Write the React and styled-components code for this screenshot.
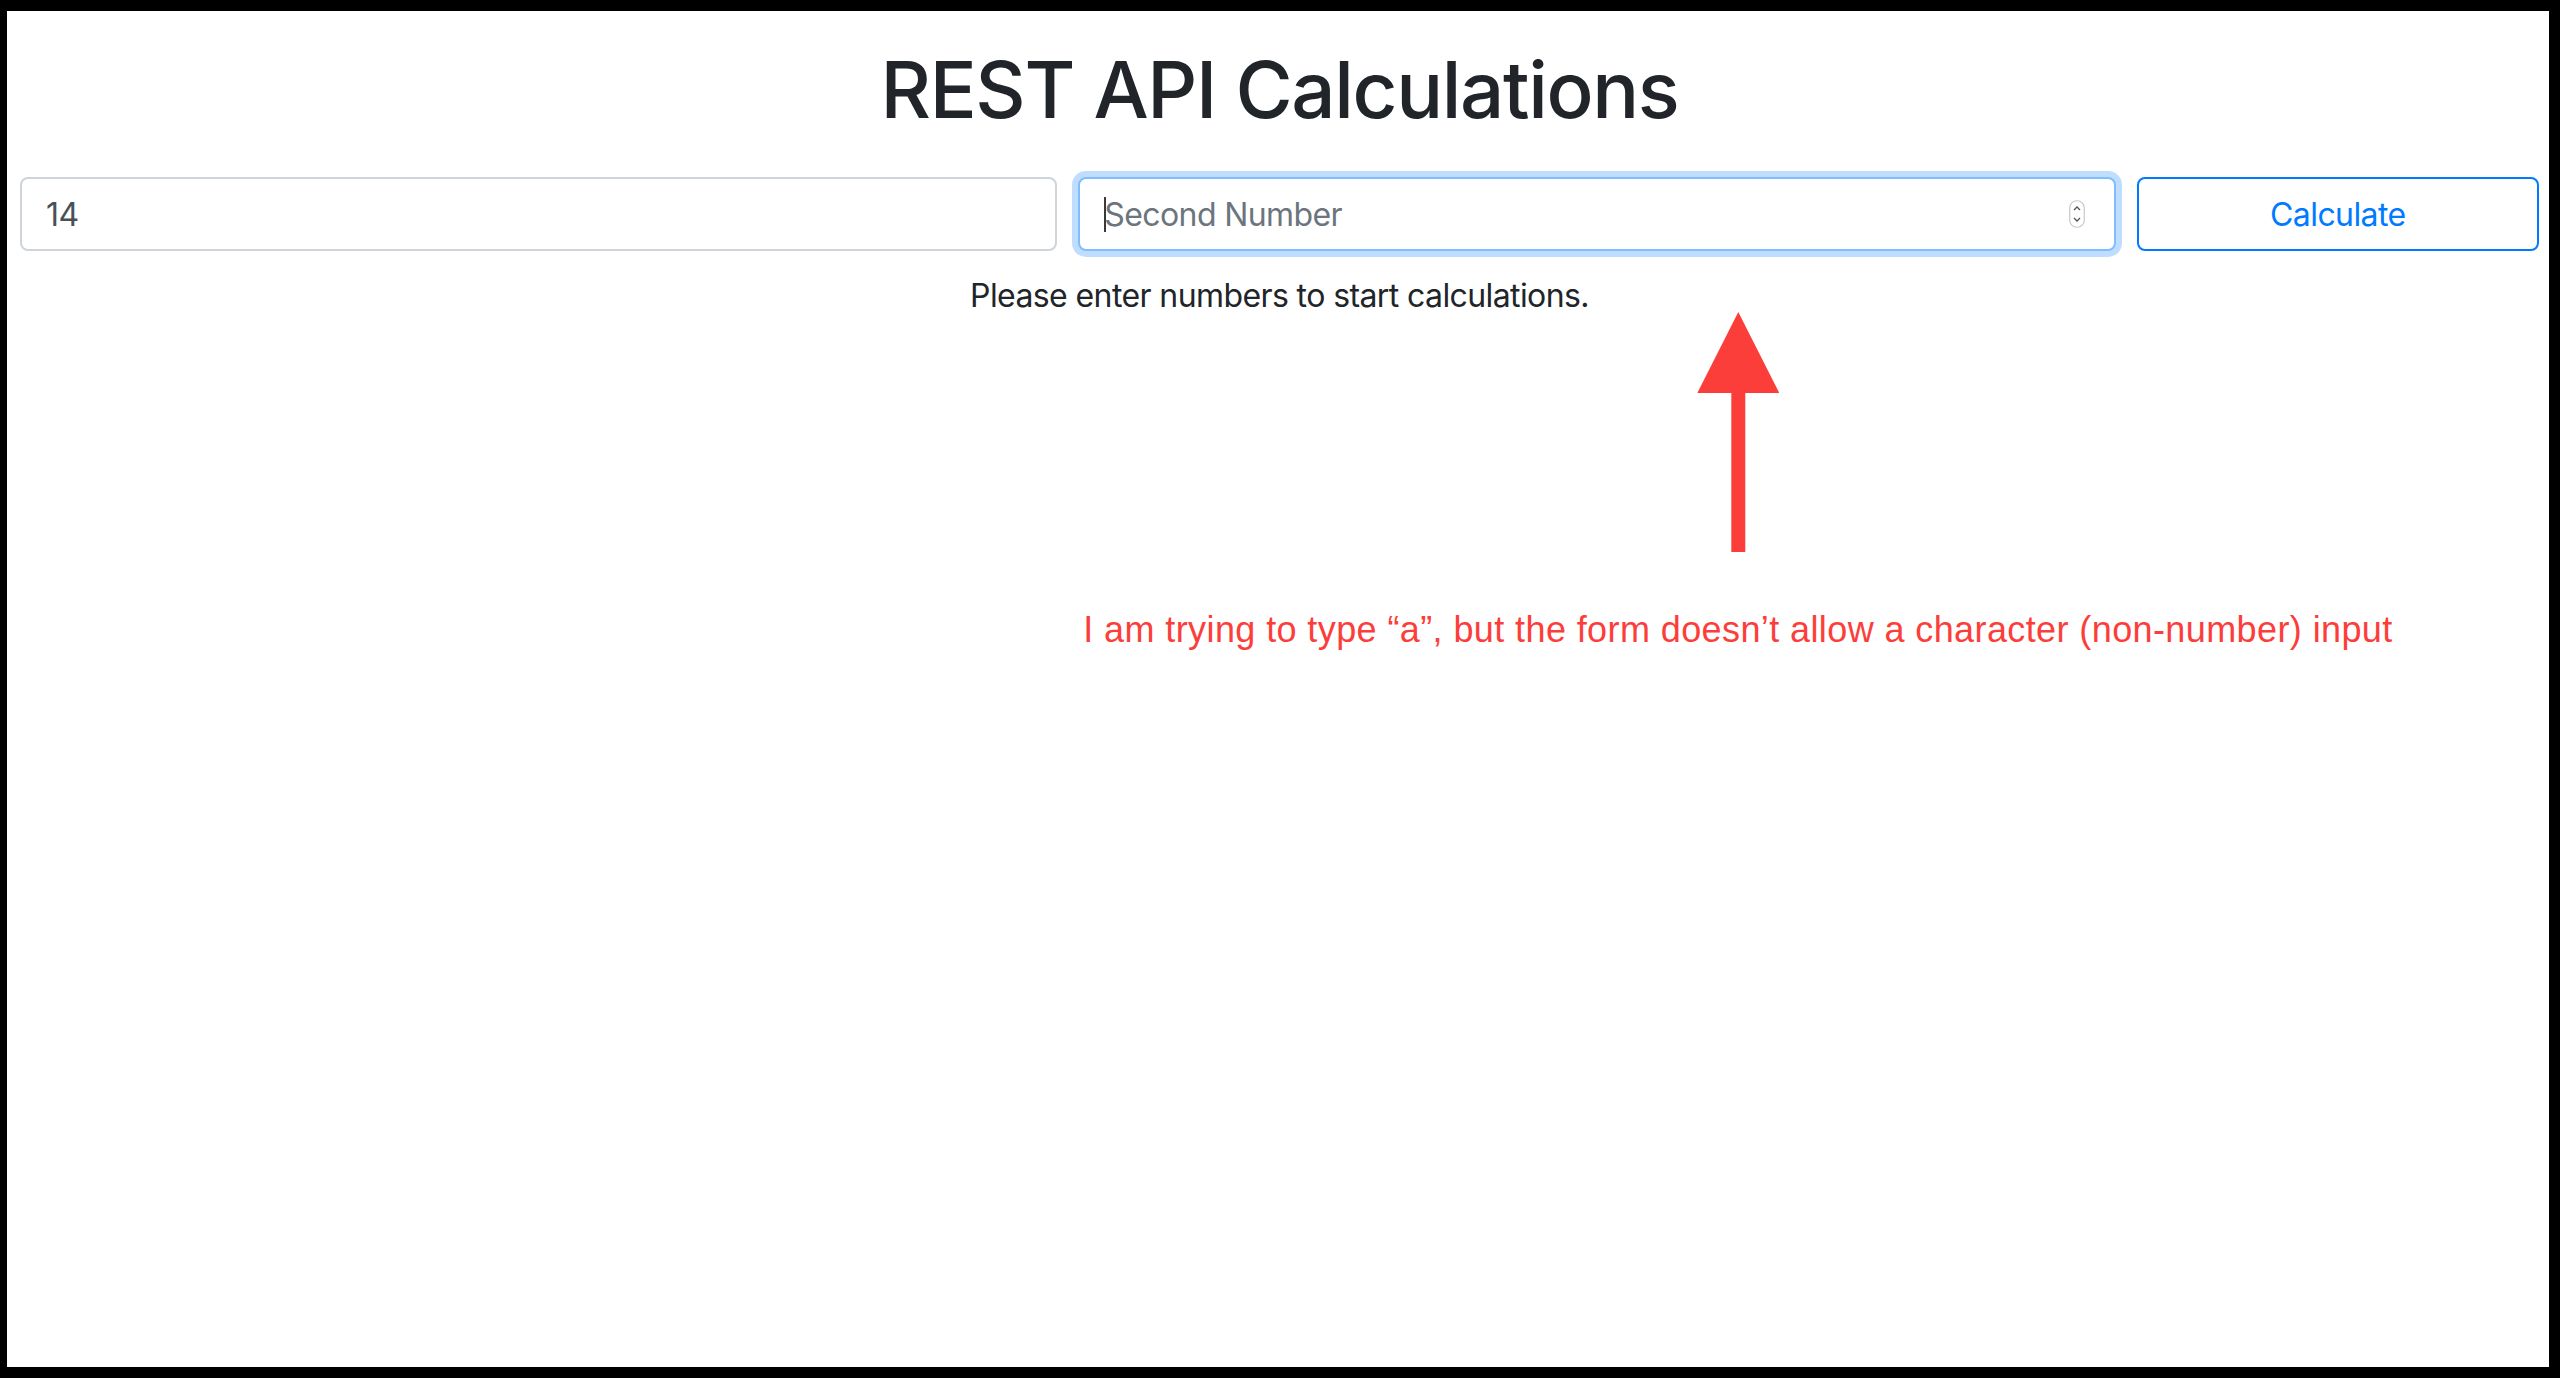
import React from "react";
import styled, { createGlobalStyle } from "styled-components";

const Global = createGlobalStyle`
  html, body { margin: 0; padding: 0; background: #000; }
  body { font-family: Inter, "Liberation Sans", Arial, sans-serif; }
  * { box-sizing: border-box; }
`;

const Frame = styled.div`
  padding: 11px 11px 11px 7px;
  background: #000;
`;

const Panel = styled.main`
  position: relative;
  height: 1356px;
  background: #fff;
  padding: 0 10px 0 13px;
  overflow: hidden;
`;

const Title = styled.h1`
  margin: 31px 0 0;
  font-size: 78px;
  line-height: 96px;
  font-weight: 500;
  color: #212529;
  text-align: center;
  letter-spacing: -1.35px;
`;

const FormRow = styled.form`
  display: flex;
  margin: 39px -10.5px 0;
`;

const Col = styled.div`
  flex: 0 0 ${(p) => (p.$span / 12) * 100}%;
  max-width: ${(p) => (p.$span / 12) * 100}%;
  padding: 0 10.5px;
`;

const Field = styled.div`
  position: relative;
`;

const Input = styled.input`
  display: block;
  width: 100%;
  height: 74px;
  padding: 0 24px;
  font-family: Inter, "Liberation Sans", Arial, sans-serif;
  font-size: 32px;
  letter-spacing: -0.6px;
  color: #495057;
  background: #fff;
  border: 2px solid ${(p) => (p.$focused ? "#80bdff" : "#ced4da")};
  border-radius: 8px;
  outline: none;
  box-shadow: ${(p) => (p.$focused ? "0 0 0 6px rgba(0, 123, 255, 0.25)" : "none")};
  &::placeholder { color: #6c757d; opacity: 1; }
`;

const Caret = styled.span`
  position: absolute;
  left: 26px;
  top: 20px;
  width: 2px;
  height: 35px;
  background: #3a3a3a;
`;

const Spinner = styled.svg`
  position: absolute;
  right: 31px;
  top: 23px;
`;

const Button = styled.button`
  display: block;
  width: 100%;
  height: 74px;
  font-family: Inter, "Liberation Sans", Arial, sans-serif;
  font-size: 32px;
  letter-spacing: -0.6px;
  color: #007bff;
  background: #fff;
  border: 2px solid #007bff;
  border-radius: 8px;
  cursor: pointer;
`;

const Message = styled.p`
  margin: 21px 0 0;
  font-size: 32px;
  line-height: 48px;
  letter-spacing: -0.6px;
  color: #212529;
  text-align: center;
`;

const Annotation = styled.div`
  position: absolute;
  left: 1731px;
  top: 301px;
  transform: translateX(-50%);
  display: flex;
  flex-direction: column;
  align-items: center;
`;

const AnnotationText = styled.div`
  margin-top: 57px;
  font-family: "Liberation Sans", Arial, sans-serif;
  font-size: 36px;
  line-height: 42px;
  letter-spacing: 0.4px;
  color: #fc3e3b;
  white-space: nowrap;
`;

export default function App() {
  return (
    <>
      <Global />
      <Frame>
        <Panel>
          <Title>REST API Calculations</Title>
          <FormRow onSubmit={(e) => e.preventDefault()}>
            <Col $span={5}>
              <Field>
                <Input type="text" defaultValue="14" />
              </Field>
            </Col>
            <Col $span={5}>
              <Field>
                <Input type="text" placeholder="Second Number" $focused />
                <Caret />
                <Spinner width="16" height="28" viewBox="0 0 16 28">
                  <rect x="0.75" y="0.75" width="14.5" height="26.5" rx="7" fill="#fff" stroke="#c8c8c8" strokeWidth="1.2" />
                  <path d="M5 10 L8 7 L11 10" fill="none" stroke="#555" strokeWidth="1.3" />
                  <path d="M5 18 L8 21 L11 18" fill="none" stroke="#555" strokeWidth="1.3" />
                </Spinner>
              </Field>
            </Col>
            <Col $span={2}>
              <Button type="submit">Calculate</Button>
            </Col>
          </FormRow>
          <Message>Please enter numbers to start calculations.</Message>
          <Annotation>
            <svg width="82" height="240" viewBox="0 0 82 240">
              <path d="M41 0 L82 81 L48 81 L48 240 L34 240 L34 81 L0 81 Z" fill="#fc3e3b" />
            </svg>
            <AnnotationText>I am trying to type “a”, but the form doesn’t allow a character (non-number) input</AnnotationText>
          </Annotation>
        </Panel>
      </Frame>
    </>
  );
}
